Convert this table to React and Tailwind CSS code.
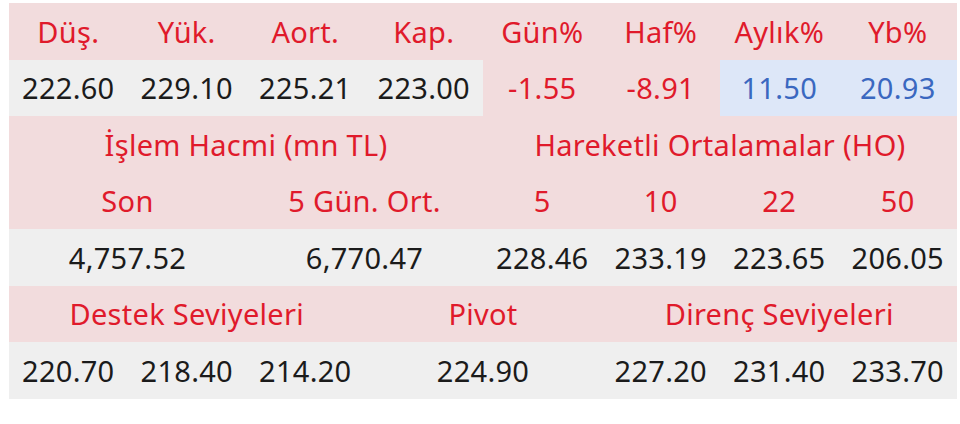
const PINK = "bg-[#f2dcdd]";
const GRAY = "bg-[#efefef]";

function Cell({ children, span = 1, className = "" }) {
  const spans = {
    1: "col-span-1",
    2: "col-span-2",
    3: "col-span-3",
    4: "col-span-4",
  };
  return (
    <div className={`${spans[span]} flex items-center justify-center ${className}`}>
      {children}
    </div>
  );
}

export default function App() {
  const head = "text-[#e01a2b]";
  const dark = "text-[#1b1b1b]";

  return (
    <div className="h-[424px] w-[960px] bg-white pl-[9px] pt-[3px]" style={{ fontFamily: '"Noto Sans", sans-serif' }}>
      <div className="grid w-[948px] grid-cols-8 auto-rows-[56.5px] text-[29px] tracking-[0.01em]">
        {["Düş.", "Yük.", "Aort.", "Kap.", "Gün%", "Haf%", "Aylık%", "Yb%"].map((t) => (
          <Cell key={t} className={`${PINK} ${head}`}>{t}</Cell>
        ))}

        {["222.60", "229.10", "225.21", "223.00"].map((t) => (
          <Cell key={t} className={`${GRAY} ${dark}`}>{t}</Cell>
        ))}
        <Cell className={`${PINK} ${head}`}>-1.55</Cell>
        <Cell className={`${PINK} ${head}`}>-8.91</Cell>
        <Cell className="bg-[#dde7f8] text-[#3a68c0]">11.50</Cell>
        <Cell className="bg-[#dde7f8] text-[#3a68c0]">20.93</Cell>

        <Cell span={4} className={`${PINK} ${head}`}>İşlem Hacmi (mn TL)</Cell>
        <Cell span={4} className={`${PINK} ${head}`}>Hareketli Ortalamalar (HO)</Cell>

        <Cell span={2} className={`${PINK} ${head}`}>Son</Cell>
        <Cell span={2} className={`${PINK} ${head}`}>5 Gün. Ort.</Cell>
        {["5", "10", "22", "50"].map((t) => (
          <Cell key={t} className={`${PINK} ${head}`}>{t}</Cell>
        ))}

        <Cell span={2} className={`${GRAY} ${dark}`}>4,757.52</Cell>
        <Cell span={2} className={`${GRAY} ${dark}`}>6,770.47</Cell>
        {["228.46", "233.19", "223.65", "206.05"].map((t) => (
          <Cell key={t} className={`${GRAY} ${dark}`}>{t}</Cell>
        ))}

        <Cell span={3} className={`${PINK} ${head}`}>Destek Seviyeleri</Cell>
        <Cell span={2} className={`${PINK} ${head}`}>Pivot</Cell>
        <Cell span={3} className={`${PINK} ${head}`}>Direnç Seviyeleri</Cell>

        {["220.70", "218.40", "214.20"].map((t) => (
          <Cell key={t} className={`${GRAY} ${dark}`}>{t}</Cell>
        ))}
        <Cell span={2} className={`${GRAY} ${dark}`}>224.90</Cell>
        {["227.20", "231.40", "233.70"].map((t) => (
          <Cell key={t} className={`${GRAY} ${dark}`}>{t}</Cell>
        ))}
      </div>
    </div>
  );
}
